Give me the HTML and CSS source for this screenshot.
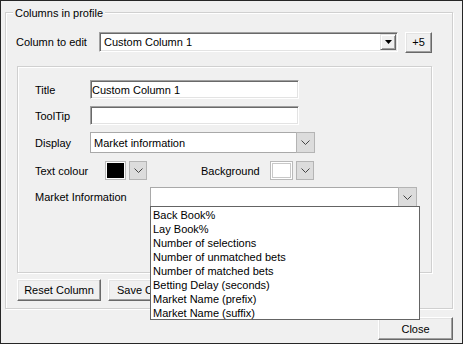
FILE: index.html
```html
<!DOCTYPE html>
<html lang="en">
<head>
    <meta charset="UTF-8">
    <title>Columns in profile</title>
    <link rel="stylesheet" href="styles.css">
</head>
<body>
    <div class="window">
        <!-- Group box -->
        <div class="group">
            <span class="group-title">Columns in profile</span>

            <div class="edit-row">
                <span class="edit-label">Column to edit</span>
                <div class="combo combo-classic">
                    <span class="combo-text">Custom Column 1</span>
                    <span class="classic-arrow">
                        <svg width="7" height="4" viewBox="0 0 7 4"><polygon points="0,0 7,0 3.5,4" fill="#000"/></svg>
                    </span>
                </div>
                <button class="btn plus-btn">+5</button>
            </div>

            <!-- Column settings -->
            <div class="panel">
                <div class="field-row row-small">
                    <span class="field-label">Title</span>
                    <input class="textbox" type="text" value="Custom Column 1">
                </div>
                <div class="field-row row-small">
                    <span class="field-label">ToolTip</span>
                    <input class="textbox" type="text" value="">
                </div>
                <div class="field-row row-display">
                    <span class="field-label">Display</span>
                    <div class="combo combo-display">
                        <span class="combo-text">Market information</span>
                        <span class="flat-arrow">
                            <svg width="9" height="5" viewBox="0 0 9 5"><polyline points="0.5,0.5 4.5,4.5 8.5,0.5" fill="none" stroke="#444" stroke-width="1"/></svg>
                        </span>
                    </div>
                </div>
                <div class="field-row row-colour">
                    <span class="field-label colour-label">Text colour</span>
                    <span class="swatch"><span class="swatch-fill fill-black"></span></span>
                    <span class="colour-btn">
                        <svg width="9" height="5" viewBox="0 0 9 5"><polyline points="0.5,0.5 4.5,4.5 8.5,0.5" fill="none" stroke="#444" stroke-width="1"/></svg>
                    </span>
                    <span class="field-label bg-label">Background</span>
                    <span class="swatch swatch-bg"><span class="swatch-fill fill-white"></span></span>
                    <span class="colour-btn">
                        <svg width="9" height="5" viewBox="0 0 9 5"><polyline points="0.5,0.5 4.5,4.5 8.5,0.5" fill="none" stroke="#444" stroke-width="1"/></svg>
                    </span>
                </div>
                <div class="field-row row-market">
                    <span class="field-label market-label">Market Information</span>
                    <div class="combo combo-market">
                        <span class="combo-text"></span>
                        <span class="flat-arrow">
                            <svg width="9" height="5" viewBox="0 0 9 5"><polyline points="0.5,0.5 4.5,4.5 8.5,0.5" fill="none" stroke="#444" stroke-width="1"/></svg>
                        </span>
                        <!-- Open dropdown list -->
                        <ul class="drop-list">
                            <li>Back Book%</li>
                            <li>Lay Book%</li>
                            <li>Number of selections</li>
                            <li>Number of unmatched bets</li>
                            <li>Number of matched bets</li>
                            <li>Betting Delay (seconds)</li>
                            <li>Market Name (prefix)</li>
                            <li>Market Name (suffix)</li>
                        </ul>
                    </div>
                </div>
            </div>

            <div class="button-row">
                <button class="btn col-btn">Reset Column</button>
                <button class="btn col-btn">Save Column</button>
            </div>
        </div>

        <button class="btn close-btn">Close</button>
    </div>
</body>
</html>
```

FILE: styles.css
```css
body {
    margin: 0;
    font-family: "Liberation Sans", Arial, sans-serif;
    font-size: 11px;
    color: #000;
    background-color: #f0f0f0;
}

/* Window frame */
.window {
    width: 463px;
    height: 344px;
    box-sizing: border-box;
    border: 1px solid #262626;
    background-color: #f0f0f0;
    display: flex;
    flex-direction: column;
}

/* Group box with caption */
.group {
    position: relative;
    margin: 11px 9px 0 4px;
    border: 1px solid #d0d0d0;
    box-shadow: inset 1px 1px 0 #fff, 1px 1px 0 #fff;
    padding: 19px 0 7px 10px;
}

.group-title {
    position: absolute;
    top: -6px;
    left: 7px;
    padding: 0 2px;
    line-height: 13px;
    background-color: #f0f0f0;
}

.edit-row {
    display: flex;
    align-items: center;
    height: 20px;
}

.edit-label {
    width: 83px;
}

/* Combo boxes */
.combo {
    position: relative;
    box-sizing: border-box;
    height: 20px;
    background-color: #fff;
    display: flex;
    align-items: center;
}

.combo-text {
    flex: 1;
    padding-left: 3px;
    white-space: nowrap;
}

.combo-classic {
    width: 299px;
    border: 1px solid;
    border-color: #a0a0a0 #fff #fff #a0a0a0;
    box-shadow: inset 1px 1px 0 #696969, inset -1px -1px 0 #e3e3e3;
    padding: 1px 1px 1px 1px;
}

.classic-arrow {
    width: 16px;
    height: 16px;
    box-sizing: border-box;
    background-color: #f0f0f0;
    border: 1px solid;
    border-color: #e3e3e3 #696969 #696969 #e3e3e3;
    box-shadow: inset 1px 1px 0 #fff, inset -1px -1px 0 #a0a0a0;
    display: flex;
    align-items: center;
    justify-content: center;
}

.combo-display,
.combo-market {
    border: 1px solid #a9a9a9;
    border-right: none;
}

.combo-display {
    width: 225px;
    height: 21px;
}

.combo-market {
    width: 267px;
}

.flat-arrow {
    align-self: stretch;
    width: 17px;
    margin-top: -1px;
    margin-bottom: -1px;
    background-color: #dcdcdc;
    border: 1px solid #b4b4b4;
    display: flex;
    align-items: center;
    justify-content: center;
}

/* Buttons */
.btn {
    box-sizing: border-box;
    font-family: "Liberation Sans", Arial, sans-serif;
    font-size: 11px;
    color: #000;
    background-color: #f0f0f0;
    border: 1px solid;
    border-color: #fff #696969 #696969 #fff;
    box-shadow: inset -1px -1px 0 #a0a0a0, inset 1px 1px 0 #e3e3e3;
    padding: 0;
    cursor: pointer;
}

.plus-btn {
    width: 27px;
    height: 21px;
    margin-left: 7px;
}

/* Inner settings panel */
.panel {
    margin: 14px 0 0 1px;
    width: 415px;
    height: 207px;
    box-sizing: border-box;
    border: 1px solid #d0d0d0;
    box-shadow: inset 1px 1px 0 #fff, 1px 1px 0 #fff;
    padding: 13px 0 0 17px;
    display: flex;
    flex-direction: column;
    gap: 7px;
}

.field-row {
    display: flex;
    align-items: center;
}

.field-label {
    width: 55px;
    flex-shrink: 0;
}

.row-small {
    height: 19px;
}

.textbox {
    box-sizing: border-box;
    width: 209px;
    height: 19px;
    margin: 0;
    padding: 0 1px;
    font-family: "Liberation Sans", Arial, sans-serif;
    font-size: 11px;
    color: #000;
    background-color: #fff;
    border: 1px solid;
    border-color: #a0a0a0 #fff #fff #a0a0a0;
    box-shadow: inset 1px 1px 0 #696969, inset -1px -1px 0 #e3e3e3;
    outline: none;
}

.row-display {
    height: 21px;
}

/* Colour pickers */
.row-colour {
    height: 19px;
    margin-top: 1px;
}

.colour-label {
    width: 70px;
}

.swatch {
    box-sizing: border-box;
    width: 21px;
    height: 19px;
    padding: 1px;
    border: 1px solid #b9b9b9;
    background-color: #fff;
    display: flex;
}

.swatch-fill {
    flex: 1;
}

.fill-black {
    background-color: #000;
}

.fill-white {
    background-color: #fff;
    border: 1px solid #c8c8c8;
}

.swatch-bg {
    width: 23px;
}

.colour-btn {
    box-sizing: border-box;
    width: 18px;
    height: 19px;
    margin-left: 3px;
    background-color: #dcdcdc;
    border: 1px solid #b4b4b4;
    display: flex;
    align-items: center;
    justify-content: center;
}

.bg-label {
    width: 69px;
    margin-left: 54px;
}

.row-market {
    height: 20px;
}

.market-label {
    width: 115px;
}

/* Dropdown list */
.drop-list {
    position: absolute;
    top: 100%;
    left: -1px;
    width: 270px;
    height: 114px;
    box-sizing: border-box;
    margin: 0;
    padding: 1px 0 0 2px;
    list-style: none;
    background-color: #fff;
    border: 1px solid #646464;
    z-index: 10;
}

.drop-list li {
    line-height: 14px;
    white-space: nowrap;
}

.button-row {
    display: flex;
    gap: 7px;
    margin: 6px 0 0 1px;
}

.col-btn {
    width: 84px;
    height: 22px;
}

.close-btn {
    align-self: flex-end;
    width: 75px;
    height: 23px;
    margin: 8px 9px 0 0;
}
```
